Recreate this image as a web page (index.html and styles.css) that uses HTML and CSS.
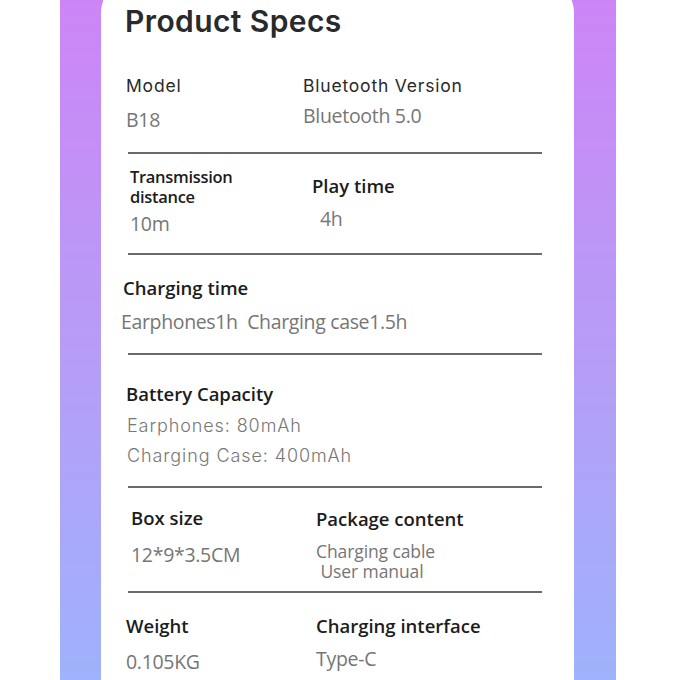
FILE: index.html
```html
<!DOCTYPE html>
<html>
  <head>
    <link rel="stylesheet" href="styles.css">
  </head>
  <body>
    <div class="frame">
      <div class="card">
        <h1 class="title">Product Specs</h1>

        <div class="spec-row row-model">
          <div class="spec">
            <div class="label label-geo">Model</div>
            <div class="value">B18</div>
          </div>
          <div class="spec">
            <div class="label label-geo">Bluetooth Version</div>
            <div class="value">Bluetooth 5.0</div>
          </div>
        </div>

        <div class="spec-row row-distance">
          <div class="spec spec-distance">
            <div class="label label-small">Transmission<br>distance</div>
            <div class="value">10m</div>
          </div>
          <div class="spec spec-play">
            <div class="label">Play time</div>
            <div class="value">4h</div>
          </div>
        </div>

        <div class="spec-row row-charging">
          <div class="spec">
            <div class="label">Charging time</div>
            <div class="value">Earphones1h&nbsp; Charging case1.5h</div>
          </div>
        </div>

        <div class="spec-row row-battery">
          <div class="spec">
            <div class="label">Battery Capacity</div>
            <div class="value-list">
              <div>Earphones: 80mAh</div>
              <div>Charging Case: 400mAh</div>
            </div>
          </div>
        </div>

        <div class="spec-row row-box">
          <div class="spec">
            <div class="label">Box size</div>
            <div class="value">12*9*3.5CM</div>
          </div>
          <div class="spec spec-package">
            <div class="label">Package content</div>
            <div class="value value-small">
              Charging cable<br>&nbsp;User manual
            </div>
          </div>
        </div>

        <div class="spec-row row-weight">
          <div class="spec">
            <div class="label">Weight</div>
            <div class="value">0.105KG</div>
          </div>
          <div class="spec spec-interface">
            <div class="label">Charging interface</div>
            <div class="value">Type-C</div>
          </div>
        </div>
      </div>
    </div>
  </body>
</html>
```

FILE: styles.css
```css
html,
body {
  margin: 0;
  height: 100%;
  background-color: #fff;
  overflow: hidden;
}

body {
  font-family: "Open Sans", "Noto Sans", sans-serif;
  color: #1f1f1f;
}

.frame {
  display: flow-root;
  margin: 0 64px 0 60px;
  height: 100%;
  padding: 0 42px 0 41px;
  background: linear-gradient(180deg, #cd85f6 0%, #b79cf6 50%, #9fb2fb 100%);
}

.card {
  margin-top: -18px;
  height: calc(100% + 18px);
  padding: 0 32px 0 27px;
  background-color: #fff;
  border-radius: 30px 30px 0 0;
}

.title {
  margin: 0 0 0 -3px;
  padding-top: 24px;
  height: 44px;
  font-family: Inter, "Noto Sans", sans-serif;
  font-size: 30px;
  font-weight: 600;
  line-height: 30px;
  letter-spacing: 0.4px;
  color: #2a2a2a;
}

.spec-row {
  box-sizing: border-box;
  display: grid;
  grid-template-columns: 177px 1fr;
  border-bottom: 2px solid #6a6a6a;
}

.spec {
  display: flex;
  flex-direction: column;
  margin-left: -2px;
}

.label {
  font-size: 18.5px;
  font-weight: 600;
  line-height: 20px;
  color: #1c1c1c;
}

.label-geo {
  font-family: Inter, "Noto Sans", sans-serif;
  font-size: 17.5px;
  font-weight: 400;
  letter-spacing: 0.8px;
  color: #2a2a2a;
}

.label-small {
  font-size: 16.5px;
  letter-spacing: -0.3px;
}

.value {
  font-size: 19.5px;
  line-height: 20px;
  letter-spacing: -0.3px;
  color: #767676;
}

.value-small {
  font-size: 17.5px;
  letter-spacing: -0.1px;
}

.value-list {
  font-family: Inter, "Noto Sans", sans-serif;
  font-size: 18px;
  font-weight: 300;
  line-height: 30px;
  letter-spacing: 0.9px;
  color: #777;
}

/* row 1 */
.row-model {
  height: 104px;
  padding-top: 26px;
}

.row-model .value {
  margin-top: 14px;
}

.row-model .spec:last-child .value {
  margin-top: 10px;
}

/* row 2 */
.row-distance {
  height: 101px;
  padding-top: 13px;
  grid-template-columns: 186px 1fr;
}

.spec-distance {
  margin-left: 2px;
}

.spec-distance .value {
  margin-top: 7px;
}

.spec-play {
  padding-top: 9px;
}

.spec-play .value {
  margin-top: 13px;
  padding-left: 8px;
}

/* row 3 */
.row-charging {
  display: block;
  height: 100px;
  padding-top: 23px;
}

.row-charging .spec {
  margin-left: -5px;
}

.row-charging .value {
  margin-top: 14px;
  margin-left: -2px;
  letter-spacing: -0.35px;
}

/* row 4 */
.row-battery {
  display: block;
  height: 133px;
  padding-top: 29px;
}

.row-battery .value-list {
  margin-top: 7px;
  margin-left: 1px;
}

/* row 5 */
.row-box {
  height: 105px;
  padding-top: 20px;
  grid-template-columns: 190px 1fr;
}

.row-box .spec:first-child {
  margin-left: 3px;
}

.row-box .value {
  margin-top: 17px;
}

.spec-package {
  padding-top: 1px;
}

.spec-package .value {
  margin-top: 12px;
}

/* row 6 */
.row-weight {
  border-bottom: none;
  padding-top: 23px;
  grid-template-columns: 190px 1fr;
}

.row-weight .value {
  margin-top: 16px;
}

.spec-interface .value {
  margin-top: 13px;
}
```
